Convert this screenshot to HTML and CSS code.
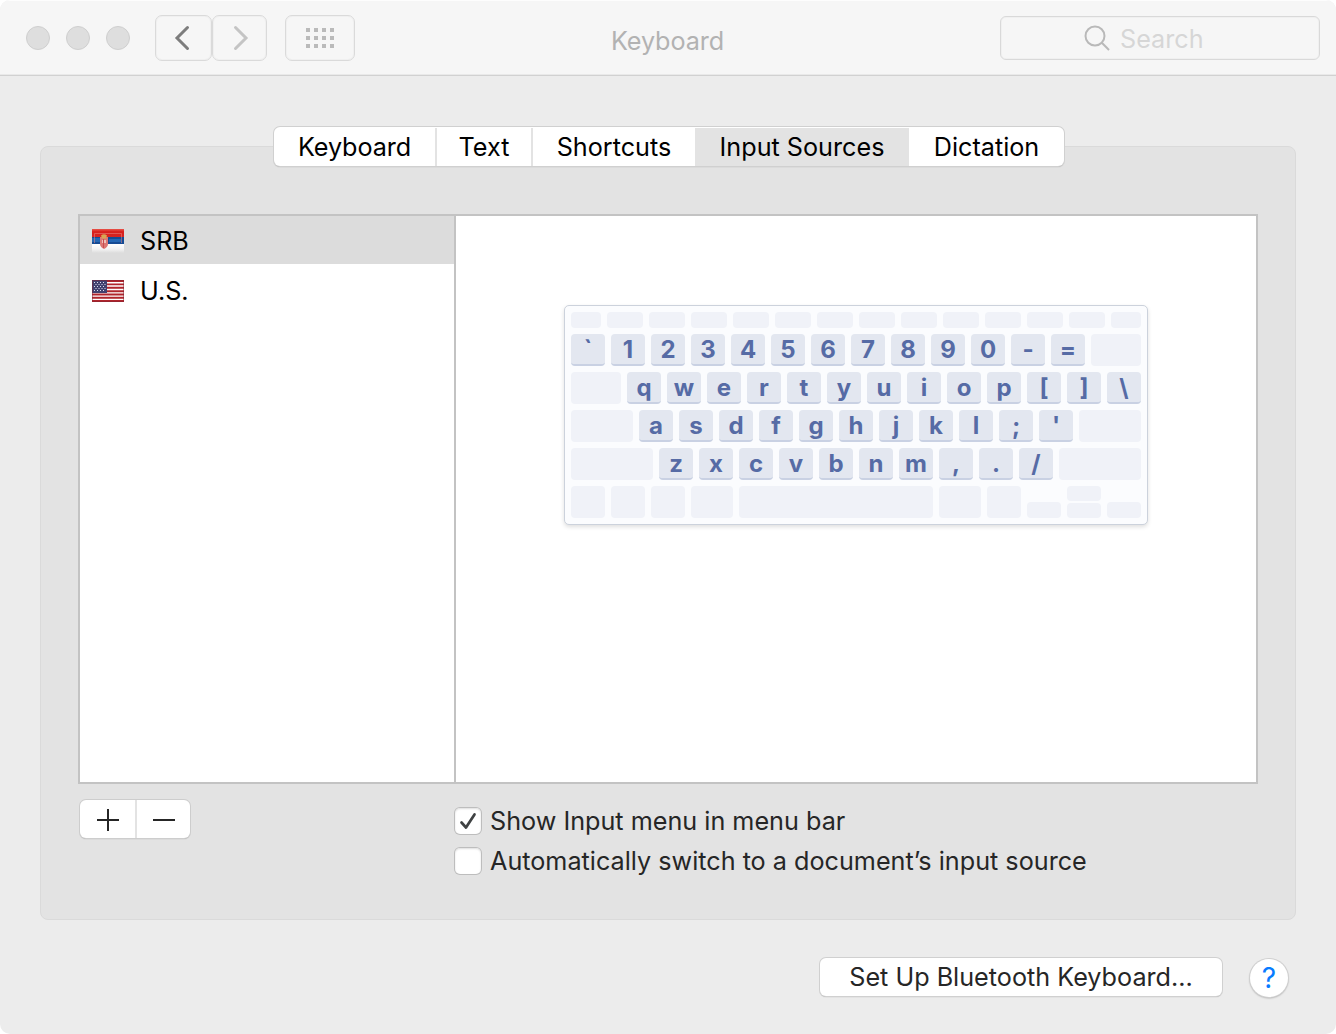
FILE: index.html
```html
<!DOCTYPE html>
<html lang="en">
<head>
<meta charset="utf-8">
<title>Keyboard</title>
<link rel="stylesheet" href="styles.css">
</head>
<body>
<main class="window">
  <header class="toolbar">
    <div class="lights"><span class="light"></span><span class="light"></span><span class="light"></span></div>
    <div class="nav">
      <button class="tool back" aria-label="Back"><svg width="54" height="44" viewBox="0 0 54 44"><path d="M30.5 11.5 20 22l10.500 10.500" fill="none" stroke="#7d7d7d" stroke-width="3" stroke-linecap="round" stroke-linejoin="miter"/></svg></button>
      <button class="tool forward" aria-label="Forward"><svg width="53" height="44" viewBox="0 0 53 44"><path d="M22.500 11.500 33 22l-10.500 10.500" fill="none" stroke="#c4c4c4" stroke-width="3" stroke-linecap="round"/></svg></button>
    </div>
    <button class="tool all" aria-label="Show All"><svg width="28" height="20" viewBox="0 0 28 20" fill="#bababa" shape-rendering="crispEdges"><path d="M0 0h4v4H0zM8 0h4v4H8zM16 0h4v4h-4zM24 0h4v4h-4zM0 8h4v4H0zM8 8h4v4H8zM16 8h4v4h-4zM24 8h4v4h-4zM0 16h4v4H0zM8 16h4v4H8zM16 16h4v4h-4zM24 16h4v4h-4z"/></svg></button>
    <h1 class="title">Keyboard</h1>
    <div class="search">
      <svg width="28" height="28" viewBox="0 0 28 28" fill="none" stroke="#b9b9b9" stroke-width="2"><circle cx="12" cy="12" r="9.500"/><path d="M18.800 18.800 26 26"/></svg>
      <span>Search</span>
    </div>
  </header>

  <nav class="tabs">
    <button class="tab t-keyboard">Keyboard</button>
    <button class="tab t-text">Text</button>
    <button class="tab t-shortcuts">Shortcuts</button>
    <button class="tab t-input selected">Input Sources</button>
    <button class="tab t-dictation">Dictation</button>
  </nav>

  <section class="panel">
    <div class="sources">
      <ul class="list">
        <li class="source selected">
          <svg width="32" height="24" viewBox="0 0 32 24">
            <defs>
              <linearGradient id="red" x2="0" y2="1"><stop offset="0" stop-color="#e8564c"/><stop offset=".3" stop-color="#d81f1c"/><stop offset="1" stop-color="#d52524"/></linearGradient>
              <linearGradient id="white" x2="0" y2="1"><stop offset="0" stop-color="#fff"/><stop offset=".55" stop-color="#f3f3f3"/><stop offset="1" stop-color="#dcdcdc"/></linearGradient>
            </defs>
            <path d="M0 0h32v9H0z" fill="url(#red)"/>
            <path d="M0 8h32v7H0z" fill="#164b94"/>
            <path d="M0 9h9v4H0zM17 10h12v3H17z" fill="#2467b4"/>
            <path d="M0 15h32v9H0z" fill="url(#white)"/>
            <path d="M2.500 14V4.500h27V14" fill="none" stroke="#f08b83" stroke-opacity=".5"/>
            <path d="M8 8h8v7q0 3-4 5-4-2-4-5z" fill="#dc7773"/>
            <path d="M9 6.500q3-2.500 6 0l-1 3h-4z" fill="#d8a553"/>
            <path d="M10 11h4v3h-4z" fill="#eec0b8"/><path d="M11.500 10v9" stroke="#c74d50"/>
          </svg>
          <span>SRB</span>
        </li>
        <li class="source">
          <svg width="32" height="22" viewBox="0 0 32 22">
            <path d="M0 0h32v22H0z" fill="#fff"/>
            <path d="M0 1h32M0 4.400h32M0 7.800h32M0 11.200h32M0 14.500h32M0 17.800h32M0 21h32" stroke="#b0252c" stroke-width="1.900"/>
            <path d="M0 0h15v13H0z" fill="#41416f"/>
            <path d="M2 2.500h12M3.500 4.500h11M2 6.500h12M3.500 8.500h11M2 10.500h12" stroke="#dedeee" stroke-dasharray="1 2"/>
            <path d="M.5 .5h31v21H.5z" fill="none" stroke="#812431" stroke-opacity=".5"/>
          </svg>
          <span class="us">U.S.</span>
        </li>
      </ul>
      <div class="preview">
        <div class="keyboard">
          <div class="row fn"><i class="k30"></i><i></i><i></i><i></i><i></i><i></i><i></i><i></i><i></i><i></i><i></i><i></i><i></i><i class="k30"></i></div>
          <div class="row"><b>`</b><b>1</b><b>2</b><b>3</b><b>4</b><b>5</b><b>6</b><b>7</b><b>8</b><b>9</b><b>0</b><b>-</b><b>=</b><i class="k50"></i></div>
          <div class="row"><i class="k50"></i><b>q</b><b>w</b><b>e</b><b>r</b><b>t</b><b>y</b><b>u</b><b>i</b><b>o</b><b>p</b><b>[</b><b>]</b><b>\</b></div>
          <div class="row"><i class="k62"></i><b>a</b><b>s</b><b>d</b><b>f</b><b>g</b><b>h</b><b>j</b><b>k</b><b>l</b><b>;</b><b>'</b><i class="k62"></i></div>
          <div class="row"><i class="k82"></i><b>z</b><b>x</b><b>c</b><b>v</b><b>b</b><b>n</b><b>m</b><b>,</b><b>.</b><b>/</b><i class="k82"></i></div>
          <div class="row"><i></i><i></i><i></i><i class="k42"></i><i class="space"></i><i class="k42"></i><i></i><i class="half"></i><span class="updown"><i></i><i></i></span><i class="half"></i></div>
        </div>
      </div>
    </div>
    <div class="controls">
      <div class="addremove">
        <button class="add" aria-label="Add"><svg width="22" height="22" viewBox="0 0 22 22"><path d="M0 11h22M11 0v22" stroke="#262626" stroke-width="2"/></svg></button>
        <button class="remove" aria-label="Remove"><svg width="22" height="22" viewBox="0 0 22 22"><path d="M0 11h22" stroke="#262626" stroke-width="2"/></svg></button>
      </div>
      <div class="checks">
        <label class="check"><span class="box"><svg width="26" height="26" viewBox="0 0 26 26"><path d="M6.500 14.500 11 19.500 19.500 6.500" fill="none" stroke="#3f4243" stroke-width="2.700" stroke-linecap="round" stroke-linejoin="round"/></svg></span><span class="show">Show Input menu in menu bar</span></label>
        <label class="check"><span class="box"></span><span class="auto">Automatically switch to a document’s input source</span></label>
      </div>
    </div>
  </section>

  <footer class="footer">
    <button class="bluetooth">Set Up Bluetooth Keyboard...</button>
    <button class="help" aria-label="Help">?</button>
  </footer>
</main>
</body>
</html>
```
FILE: styles.css
```css
* { box-sizing: border-box; }
html, body { margin: 0; background: #fff; }
body { font-family: Inter, "Liberation Sans", sans-serif; font-size: 25.2px; line-height: 30px; color: #000; }
button { font: inherit; color: inherit; border: 0; padding: 0; margin: 0; background: none; letter-spacing: inherit; white-space: nowrap; }
svg { display: block; flex: none; }

.window { width: 1336px; height: 1034px; background: #ececec; border-radius: 10px; overflow: hidden; display: flex; flex-direction: column; }

.toolbar { height: 76px; flex: none; background: #f6f6f6; border-bottom: 1px solid #d1d1d1; box-shadow: inset 0 1px #fdfdfd, inset 0 -1px #e9e9e9; display: grid; grid-template-columns: 129px 130px 70px 1fr 320px; padding: 0 16px 0 26px; align-items: start; }
.lights { display: flex; gap: 16px; padding-top: 26px; }
.light { width: 24px; height: 24px; border-radius: 50%; background: #dedede; border: 1px solid #cfcfcf; }
.nav { display: flex; padding-top: 15px; }
.tool { height: 46px; border: 1px solid #dadada; border-radius: 7px; display: flex; align-items: center; justify-content: center; box-shadow: inset 0 0 0 1px #f0f0f0; }
.back { width: 57px; }
.forward { width: 55px; }
.all { width: 70px; margin-top: 15px; }
.title { margin: 26px 0 0; padding-left: 256px; font-size: 25.2px; font-weight: 400; color: #b2b2b2; letter-spacing: -.1px; }
.search { height: 44px; margin-top: 16px; border: 1px solid #d9d9d9; border-radius: 6px; box-shadow: inset 0 0 0 1px #f0f0f0; display: flex; gap: 9px; padding: 7px 0 0 82px; color: #d6d6d6; }

.tabs { position: relative; display: flex; flex: none; width: 790px; height: 39px; margin: 51px 0 -20px 274px; padding-top: 1px; background: #fff; border-radius: 6px; overflow: visible; box-shadow: 0 0 0 1px #d0d0d0, 0 1px 1px #999; }
.tab { height: 38px; }
.tab.t-keyboard { width: 163px; border-right: 2px solid #e3e3e3; border-radius: 6px 0 0 6px; letter-spacing: -.1px; }
.tab.t-text { width: 96px; border-right: 2px solid #e3e3e3; }
.tab.t-shortcuts { width: 162px; }
.tab.t-input { width: 214px; background: #e3e3e3; }
.tab.t-dictation { width: 155px; }

.panel { flex: none; height: 774px; margin: 0 40px; padding: 67px 37px 0; border: 1px solid #dadada; border-radius: 8px; background: #e3e3e3; }
.sources { display: flex; height: 570px; border: 2px solid #c3c3c3; background: #fff; }
.list { width: 376px; margin: 0; padding: 0; list-style: none; border-right: 2px solid #c3c3c3; display: flex; flex-direction: column; gap: 2px; }
.source { height: 48px; display: flex; align-items: center; gap: 16px; padding: 2px 0 0 12px; }
.source.selected { background: #dcdcdc; }
.preview { flex: 1; padding: 89px 0 0 108px; }

.keyboard { width: 584px; height: 220px; padding: 6px; border: 1px solid #ccd2dc; border-radius: 5px; background: #fbfcfe; box-shadow: 0 2px 4px rgba(0,0,0,.13); display: flex; flex-direction: column; gap: 6px; }
.row { display: flex; gap: 6px; height: 32px; }
.row i { width: 34px; border-radius: 4px; background: #f0f2f8; }
.row b { width: 34px; height: 32px; border-radius: 4px; background: #e3e7f0; border-bottom: 2px solid #c9d1e3; color: #566ba5; font-size: 24px; font-weight: 700; line-height: 32px; text-align: center; }
.row.fn { height: 16px; }
.row.fn i { width: 36px; }
.row .k30, .row.fn .k30 { width: 30px; }
.row .k42 { width: 42px; }
.row .k50 { width: 50px; }
.row .k62 { width: 62px; }
.row .k82 { width: 82px; }
.row .space { width: 194px; }
.row .half { height: 16px; align-self: flex-end; }
.updown { display: flex; flex-direction: column; gap: 2px; }
.updown i { height: 15px; }

.controls { display: flex; padding: 16px 0 0 2px; color: #262626; }
.addremove { display: flex; width: 110px; height: 38px; border-radius: 6px; background: #fff; box-shadow: 0 0 0 1px #cdcdcd, 0 1px 1px #999; }
.addremove button { display: flex; align-items: center; justify-content: center; padding-top: 2px; }
.add { width: 57px; border-right: 2px solid #e3e3e3; }
.addremove .add { border-right: 2px solid #e3e3e3; }
.remove { width: 53px; }
.checks { margin: 6px 0 0 265px; display: flex; flex-direction: column; gap: 10px; }
.check { display: flex; align-items: center; height: 30px; gap: 9px; white-space: nowrap; }
.box { width: 26px; height: 26px; border-radius: 5px; background: #fff; box-shadow: 0 0 0 1px #bdbdbd, inset 0 1px 2px #ddd; }

.footer { display: flex; gap: 28px; padding: 38px 0 0 820px; }
.bluetooth { width: 402px; height: 38px; border-radius: 6px; background: #fff; color: #262626; box-shadow: 0 0 0 1px #d0d0d0, 0 1px 1px #999; }
.help { width: 38px; height: 38px; margin-top: 1px; border-radius: 50%; background: #fff; color: #087cff; font-size: 28px; box-shadow: 0 0 0 1px #d0d0d0, 0 1px 2px #888; }
```
